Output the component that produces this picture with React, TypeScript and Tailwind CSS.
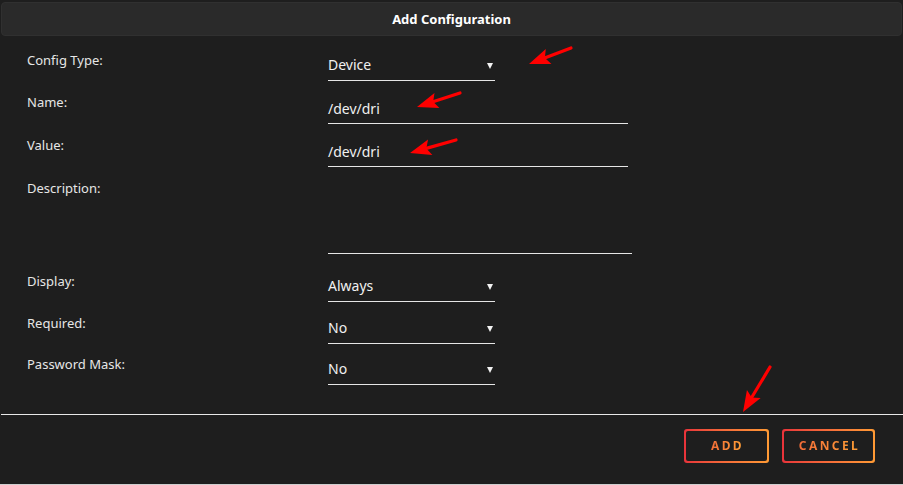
import React from 'react';

const font = { fontFamily: '"Noto Sans", "Liberation Sans", sans-serif' };

function Caret() {
  return (
    <svg width="6" height="6" viewBox="0 0 6 6" className="mr-[2px] mt-[3px]">
      <polygon points="0,0 6,0 3,6" fill="#f2f2f2" />
    </svg>
  );
}

function SelectField({ value }: { value: string }) {
  return (
    <div className="flex h-[31px] w-[167px] items-center justify-between border-b border-[#e6e6e6] pb-[1px] text-[14px] text-[#f0f0f0]">
      <span>{value}</span>
      <Caret />
    </div>
  );
}

function TextField({ value, w = 'w-[300px]' }: { value: string; w?: string }) {
  return (
    <div className={`flex h-[32px] items-center border-b border-[#e6e6e6] pt-[1px] text-[14px] text-[#f0f0f0] ${w}`}>
      {value}
    </div>
  );
}

function Row({ label, children, className = '' }: { label: string; children: React.ReactNode; className?: string }) {
  return (
    <div className={`flex ${className}`}>
      <div className="w-[301px] pt-[1px] text-[13px] leading-[18px] text-[#e6e6e6]">{label}</div>
      {children}
    </div>
  );
}

function Arrow({ x1, y1, x2, y2 }: { x1: number; y1: number; x2: number; y2: number }) {
  // tail (x1,y1) -> tip (x2,y2)
  const dx = x2 - x1;
  const dy = y2 - y1;
  const len = Math.hypot(dx, dy);
  const ux = dx / len;
  const uy = dy / len;
  const hl = 21;
  const hw = 8;
  const bx = x2 - ux * hl;
  const by = y2 - uy * hl;
  const pts = [
    `${x2},${y2}`,
    `${bx - uy * hw},${by + ux * hw}`,
    `${bx + ux * 4},${by + uy * 4}`,
    `${bx + uy * hw},${by - ux * hw}`,
  ].join(' ');
  return (
    <g>
      <line x1={x1} y1={y1} x2={bx + ux * 5} y2={by + uy * 5} stroke="#ff0000" strokeWidth="3.2" strokeLinecap="round" />
      <polygon points={pts} fill="#ff0000" />
    </g>
  );
}

function GradButton({ label, w }: { label: string; w: string }) {
  return (
    <div className={`h-[34px] rounded-[3px] bg-gradient-to-r from-[#e8323a] to-[#ff9a34] p-[2px] ${w}`}>
      <div className="flex h-full w-full items-center justify-center rounded-[2px] bg-[#1e1e1e]">
        <span className="bg-gradient-to-r from-[#f26a38] to-[#ffa036] bg-clip-text pl-[2px] text-[12px] font-bold tracking-[0.2em] text-transparent">
          {label}
        </span>
      </div>
    </div>
  );
}

export default function App() {
  return (
    <div className="relative h-[485px] w-[903px] overflow-hidden bg-[#1e1e1e]" style={font}>
      <div className="flex h-[485px] flex-col border-b border-[#cfcfcf]">
        <div className="mx-[1px] mt-[2px] flex h-[34px] items-center justify-center rounded-[4px] border border-[#303030] bg-[#2a2a2a] pt-[1px] text-[13px] font-bold text-white">
          Add Configuration
        </div>

        <div className="flex flex-col pl-[27px]">
          <Row label="Config Type:" className="mt-[14px]">
            <SelectField value="Device" />
          </Row>
          <Row label="Name:" className="mt-[11px]">
            <TextField value="/dev/dri" />
          </Row>
          <Row label="Value:" className="mt-[11px]">
            <TextField value="/dev/dri" />
          </Row>
          <Row label="Description:" className="mt-[11px]">
            <div className="h-[76px] w-[304px] border-b border-[#e6e6e6]" />
          </Row>
          <Row label="Display:" className="mt-[17px]">
            <SelectField value="Always" />
          </Row>
          <Row label="Required:" className="mt-[11px]">
            <SelectField value="No" />
          </Row>
          <Row label="Password Mask:" className="mt-[10px]">
            <SelectField value="No" />
          </Row>
        </div>

        <div className="ml-[1px] mt-[29px] h-[1px] bg-[#e8e8e8]" />

        <div className="mt-[14px] flex justify-end gap-[13px] pr-[28px]">
          <GradButton label="ADD" w="w-[85px]" />
          <GradButton label="CANCEL" w="w-[93px]" />
        </div>
      </div>

      <svg className="pointer-events-none absolute left-0 top-0" width="903" height="485">
        <Arrow x1={571} y1={48} x2={529} y2={64} />
        <Arrow x1={460} y1={93} x2={417} y2={107} />
        <Arrow x1={456} y1={140} x2={410} y2={153} />
        <Arrow x1={770} y1={367} x2={743} y2={412} />
      </svg>
    </div>
  );
}
